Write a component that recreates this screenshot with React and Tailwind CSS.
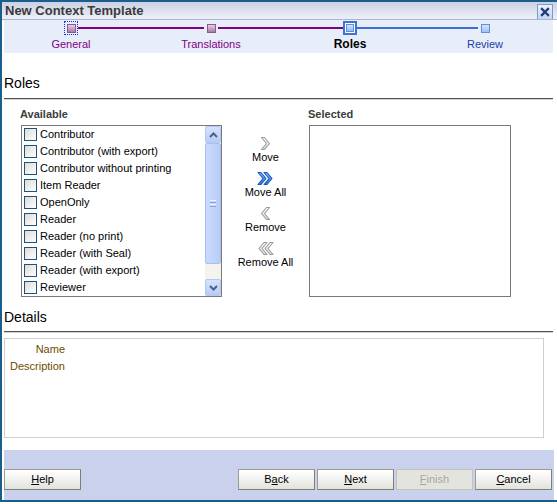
import React from "react";

const roles = [
  "Contributor",
  "Contributor (with export)",
  "Contributor without printing",
  "Item Reader",
  "OpenOnly",
  "Reader",
  "Reader (no print)",
  "Reader (with Seal)",
  "Reader (with export)",
  "Reviewer",
];

// shuttle arrow icons
function Chevron({ left = false, double = false, active = false }) {
  const fill = active ? "url(#blueChev)" : "url(#grayChev)";
  const stroke = active ? "#1b57b5" : "#9a9a9a";
  return (
    <svg width="17" height="15" viewBox="0 0 17 15">
      <defs>
        <linearGradient id="blueChev" x1="0" y1="0" x2="0" y2="1">
          <stop offset="0" stopColor="#7ab8ff" />
          <stop offset="1" stopColor="#2a78e0" />
        </linearGradient>
        <linearGradient id="grayChev" x1="0" y1="0" x2="0" y2="1">
          <stop offset="0" stopColor="#ffffff" />
          <stop offset="1" stopColor="#dcdcdc" />
        </linearGradient>
      </defs>
      <g transform={left ? "translate(17 0) scale(-1 1)" : undefined} strokeLinejoin="round" strokeWidth="1.1">
        {double ? (
          <>
            <path d="M1 1.5h3l5 6-5 6H1l5-6z" fill={fill} stroke={stroke} />
            <path d="M7 1.5h3l5 6-5 6H7l5-6z" fill={fill} stroke={stroke} />
          </>
        ) : (
          <path d="M4.5 1.5h3l5 6-5 6h-3l5-6z" fill={fill} stroke={stroke} />
        )}
      </g>
    </svg>
  );
}

function ShuttleBtn({ label, ...icon }) {
  return (
    <div className="flex flex-col items-center">
      <div className="h-[14px] flex items-center">
        <Chevron {...icon} />
      </div>
      <div className="leading-[14px] text-[11px] text-black">{label}</div>
    </div>
  );
}

function ScrollArrow({ up }) {
  return (
    <div className="h-[17px] rounded-[2px] border border-[#b4c6f2] bg-linear-to-b from-[#d6e2fe] to-[#b7cbf8] flex items-center justify-center">
      <svg width="9" height="6" viewBox="0 0 9 6">
        <path
          d={up ? "M1 5l3.5-3.5L8 5" : "M1 1l3.5 3.5L8 1"}
          fill="none"
          stroke="#4d6185"
          strokeWidth="2"
        />
      </svg>
    </div>
  );
}

function Checkbox() {
  return (
    <span className="w-[13px] h-[13px] shrink-0 border border-[#1c5180] bg-linear-to-br from-[#dcdcd7] to-white" />
  );
}

function Btn({ children, disabled }) {
  return (
    <button
      className={
        disabled
          ? "w-[77px] h-[21px] text-[11px] text-[#a7a6a0] bg-[#e4e4de] border border-[#c3c3bd]"
          : "w-[77px] h-[21px] text-[11px] text-black bg-linear-to-b from-white to-[#e3e3dd] border border-[#9b9b95] border-b-[#7f7f7a] border-r-[#7f7f7a]"
      }
    >
      {children}
    </button>
  );
}

export default function App() {
  return (
    <div className="w-[557px] h-[504px] bg-white font-['Liberation_Sans',Arial,sans-serif]">
      <div className="h-[502px] border-t-2 border-l-2 border-b-2 border-[#1b5e8c] flex flex-col">
        {/* title bar */}
        <div className="h-[17px] shrink-0 flex items-center justify-between pl-[3px] pr-[4px] bg-linear-to-b from-[#cbd1e4] to-[#eef0f8]">
          <span className="text-[13px] font-bold text-[#3a3a3a] leading-[17px]">New Context Template</span>
          <span className="w-[16px] h-[16px] mt-[2px] border border-[#7f98c4] bg-linear-to-b from-[#eef3fd] to-[#c5d5f2] flex items-center justify-center">
            <svg width="10" height="10" viewBox="0 0 10 10">
              <path d="M2 2l6 6M8 2l-6 6" stroke="#1d3f7c" strokeWidth="2.4" strokeLinecap="square" />
            </svg>
          </span>
        </div>
        <div className="h-px shrink-0 bg-[#aab6d0]" />

        {/* train */}
        <div className="ml-[2px] w-[549px] h-[33px] shrink-0 bg-[#e8edfa]">
          <div className="h-[16px] flex items-center ml-[60px]">
            <div className="w-[14px] h-[14px] border border-dotted border-[#1030ff] flex items-center justify-center">
              <span className="w-[9px] h-[9px] border border-[#8a5a8a] bg-linear-to-b from-[#e9cfe9] to-[#a67ca6]" />
            </div>
            <div className="w-[126px] h-[1.5px] bg-[#800080]" />
            <div className="w-[14px] flex justify-center">
              <span className="w-[9px] h-[9px] border border-[#8a5a8a] bg-linear-to-b from-[#e9cfe9] to-[#a67ca6]" />
            </div>
            <div className="w-[125px] h-[1.5px] bg-[#800080]" />
            <div className="w-[14px] h-[14px] border-2 border-[#3d73d6] bg-white flex items-center justify-center">
              <span className="w-[8px] h-[8px] border border-[#5d8ee0] bg-linear-to-b from-[#d6e6fd] to-[#93b8ee]" />
            </div>
            <div className="w-[121px] h-[1.5px] bg-[#3b6fd6]" />
            <div className="w-[14px] flex justify-center">
              <span className="w-[9px] h-[9px] border border-[#5d8ee0] bg-linear-to-b from-[#d6e6fd] to-[#a0c0f0]" />
            </div>
          </div>
          <div className="h-[16px] flex items-center ml-[17px] text-[11px]">
            <span className="w-[100px] text-center text-[#800080]">General</span>
            <span className="w-[100px] ml-[40px] text-center text-[#800080]">Translations</span>
            <span className="w-[100px] ml-[39px] text-center text-black font-bold text-[12px]">Roles</span>
            <span className="w-[100px] ml-[35px] text-center text-[#1a3fa6]">Review</span>
          </div>
        </div>

        {/* roles section */}
        <div className="mt-[21px] ml-[2px] text-[14px] leading-[18px] text-black">Roles</div>
        <div className="mt-[6px] ml-[2px] mr-[4px] h-px bg-[#505050]" />
        <div className="ml-[2px] mr-[4px] h-px bg-[#d4d4d4]" />

        <div className="mt-[8px] ml-[18px] flex text-[11px] leading-[13px] font-bold text-[#3c3c3c]">
          <span className="w-[288px]">Available</span>
          <span>Selected</span>
        </div>

        <div className="mt-[4px] ml-[19px] flex">
          <div className="w-[201px] h-[172px] border border-[#7a7a7a] flex">
            <div className="flex-1 flex flex-col">
              {roles.map((r) => (
                <div key={r} className="h-[17px] flex items-center pl-[2px] gap-[3px] text-[11px] text-black whitespace-nowrap">
                  <Checkbox />
                  <span>{r}</span>
                </div>
              ))}
            </div>
            <div className="w-[16px] flex flex-col bg-[#f4f3ee]">
              <ScrollArrow up />
              <div className="h-[121px] rounded-[2px] border border-[#a9bff0] bg-linear-to-r from-[#cbd9fd] to-[#b9cdf9] flex flex-col items-center justify-center gap-[1px]">
                <span className="w-[6px] h-px bg-[#eef3ff]" />
                <span className="w-[6px] h-px bg-[#8ba6e0]" />
                <span className="w-[6px] h-px bg-[#eef3ff]" />
                <span className="w-[6px] h-px bg-[#8ba6e0]" />
              </div>
              <div className="flex-1" />
              <ScrollArrow />
            </div>
          </div>

          <div className="w-[87px] pt-[11px] flex flex-col items-center gap-[7px]">
            <ShuttleBtn label="Move" />
            <ShuttleBtn label="Move All" double active />
            <ShuttleBtn label="Remove" left />
            <ShuttleBtn label="Remove All" left double />
          </div>

          <div className="w-[202px] h-[172px] border border-[#7a7a7a] bg-white" />
        </div>

        {/* details */}
        <div className="mt-[11px] ml-[2px] text-[14px] leading-[18px] text-black">Details</div>
        <div className="mt-[5px] ml-[2px] mr-[4px] h-px bg-[#505050]" />
        <div className="ml-[2px] mr-[4px] h-px bg-[#d4d4d4]" />

        <div className="mt-[5px] ml-[2px] w-[540px] h-[100px] border border-[#cfcfcf] pt-[2px]">
          <div className="w-[60px] text-right text-[11px] leading-[17px] text-[#6b4c00]">
            <div>Name</div>
            <div>Description</div>
          </div>
        </div>

        {/* footer */}
        <div className="mt-[12px] ml-[2px] w-[550px] h-[50px] bg-[#c9d1ec] pt-[19px] flex justify-between">
          <Btn>
            <u>H</u>elp
          </Btn>
          <div className="flex gap-[2px] mr-[2px]">
            <Btn>
              B<u>a</u>ck
            </Btn>
            <Btn>
              <u>N</u>ext
            </Btn>
            <Btn disabled>
              <u>F</u>inish
            </Btn>
            <Btn>
              <u>C</u>ancel
            </Btn>
          </div>
        </div>
      </div>
    </div>
  );
}
